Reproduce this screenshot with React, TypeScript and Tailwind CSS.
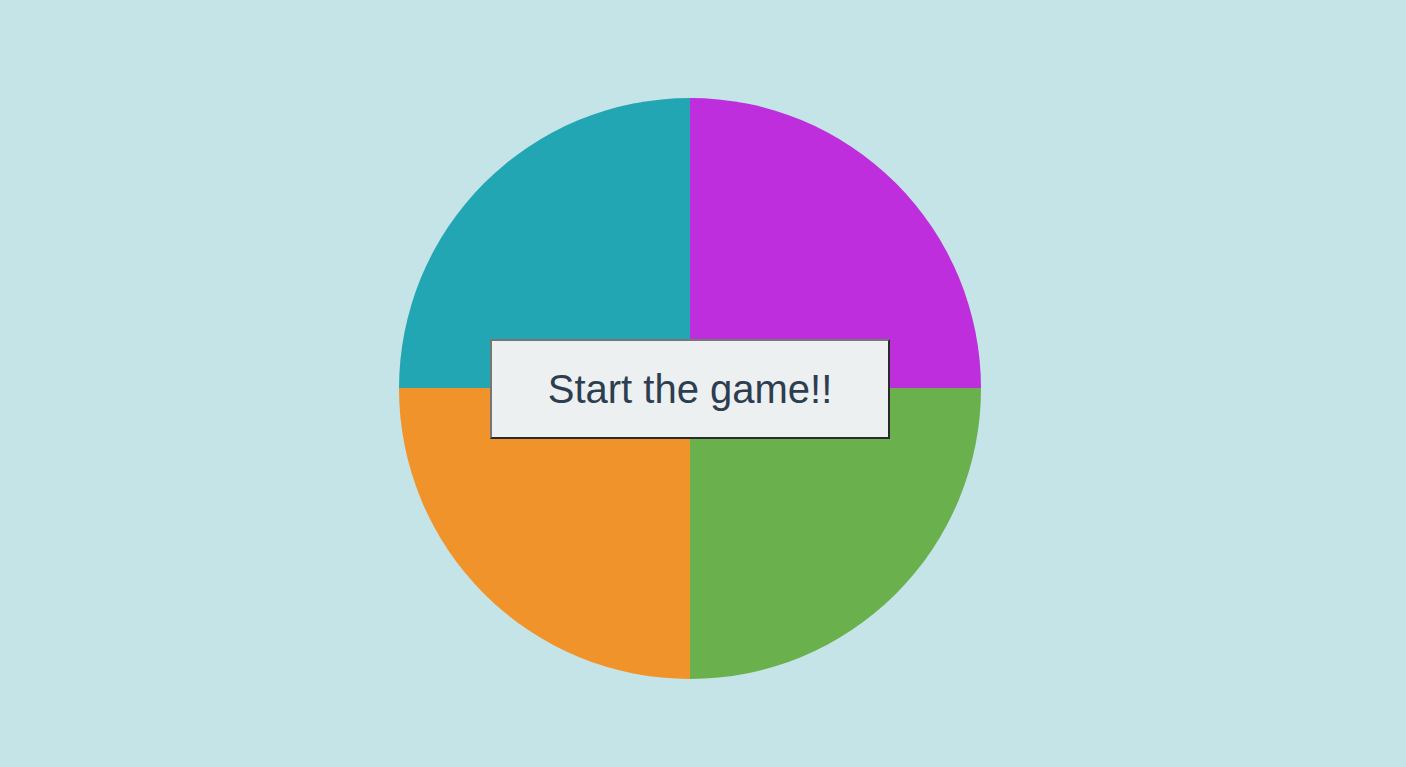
export default function App() {
  return (
    <div className="min-h-[767px] w-full bg-[#c4e4e7] pl-[399px] pt-[98px]" style={{ fontFamily: '"Liberation Sans", Arial, sans-serif' }}>
      <div className="relative h-[581px] w-[582px]">
        <div className="grid h-full w-full grid-cols-[291px_291px] grid-rows-[290px_291px] overflow-hidden rounded-[50%]">
          <div className="bg-[#22a6b3]" />
          <div className="bg-[#be2edd]" />
          <div className="bg-[#f0932b]" />
          <div className="bg-[#6ab04c]" />
        </div>
        <button className="absolute left-[91px] top-[241px] flex h-[100px] w-[400px] items-center justify-center border-2 border-t-[#767676] border-l-[#767676] border-b-[#2a2a2a] border-r-[#2a2a2a] bg-[#ecf0f1] text-[40px] leading-none text-[#2c3e50]">
          Start the game!!
        </button>
      </div>
    </div>
  );
}
